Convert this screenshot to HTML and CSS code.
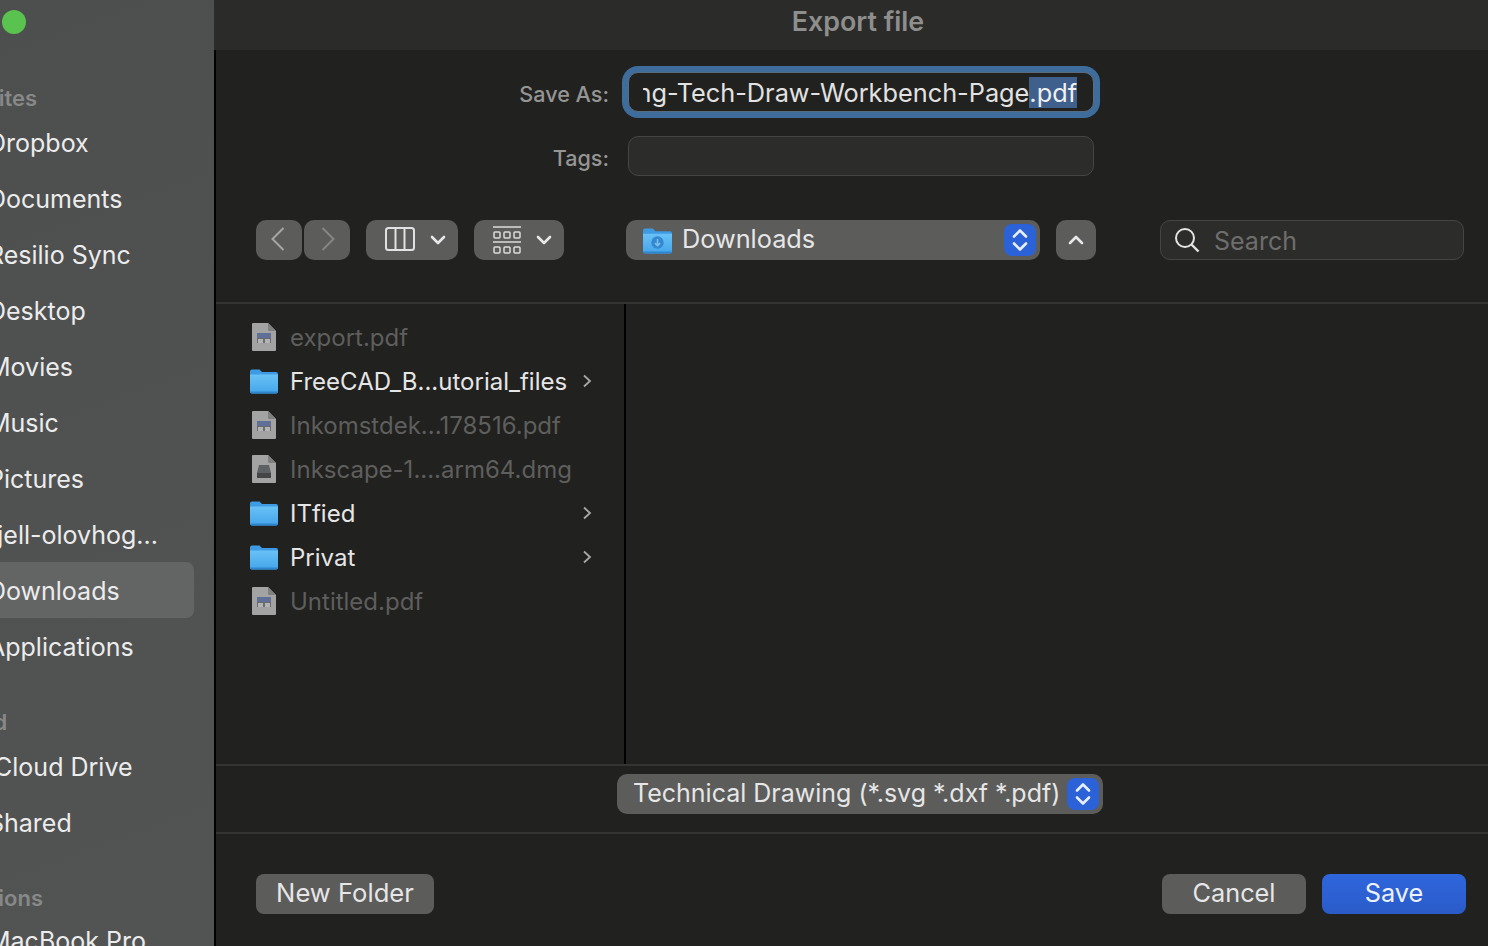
FILE: index.html
```html
<!DOCTYPE html>
<html lang="en">
<head>
  <meta charset="UTF-8">
  <title>Export file</title>
  <link rel="stylesheet" href="styles.css">
</head>
<body>
  <svg class="defs" width="0" height="0">
    <defs>
      <linearGradient id="folder-body" x1="0" y1="0" x2="0" y2="1">
        <stop offset="0" stop-color="#69c1f6"/>
        <stop offset="1" stop-color="#45a5ea"/>
      </linearGradient>
      <symbol id="folder" viewBox="0 0 28 26">
        <path d="M0 3.5A2 2 0 0 1 2 1.5h7.5l2.5 2.5h14a2 2 0 0 1 2 2V8H0z" fill="#3e9be3"/>
        <path d="M0 6.5h28v17a2 2 0 0 1-2 2H2a2 2 0 0 1-2-2z" fill="url(#folder-body)"/>
        <path d="M0 23.5h28a2 2 0 0 1-2 2H2a2 2 0 0 1-2-2z" fill="#2f86cf"/>
      </symbol>
      <symbol id="pdf" viewBox="0 0 24 28">
        <path d="M1 0h15l8 8v19a1 1 0 0 1-1 1H1a1 1 0 0 1-1-1V1a1 1 0 0 1 1-1z" fill="#a3a3a3"/>
        <path d="M16 0l8 8h-7a1 1 0 0 1-1-1z" fill="#808080"/>
        <rect x="5" y="10" width="14" height="5" fill="#5f6f96"/>
        <rect x="5" y="15" width="14" height="5" fill="#6a6a70"/>
        <rect x="6" y="16" width="5" height="4" fill="#b4b4b4"/>
        <rect x="13" y="16" width="5" height="4" fill="#b4b4b4"/>
      </symbol>
      <symbol id="dmg" viewBox="0 0 24 28">
        <path d="M1 0h15l8 8v19a1 1 0 0 1-1 1H1a1 1 0 0 1-1-1V1a1 1 0 0 1 1-1z" fill="#a3a3a3"/>
        <path d="M16 0l8 8h-7a1 1 0 0 1-1-1z" fill="#808080"/>
        <path d="M7 10h10l2 8v5H5v-5z" fill="#5e6163"/>
        <rect x="5" y="18" width="14" height="5" fill="#434547"/>
      </symbol>
      <symbol id="stepper" viewBox="0 0 32 32">
        <rect width="32" height="32" rx="8" fill="#2c62d8"/>
        <path d="M10 12.500l6-6 6 6M10 19.500l6 6 6-6" fill="none" stroke="#e8eefb" stroke-width="2.600" stroke-linecap="round" stroke-linejoin="round"/>
      </symbol>
    </defs>
  </svg>

  <aside class="sidebar">
    <div class="traffic-dot"></div>
    <div class="side-list">
      <div class="side-heading side-heading-first">Favorites</div>
      <div class="side-item">Dropbox</div>
      <div class="side-item">Documents</div>
      <div class="side-item">Resilio Sync</div>
      <div class="side-item">Desktop</div>
      <div class="side-item">Movies</div>
      <div class="side-item">Music</div>
      <div class="side-item">Pictures</div>
      <div class="side-item">fjell-olovhog...</div>
      <div class="side-item side-item-active">Downloads</div>
      <div class="side-item">Applications</div>
      <div class="side-heading side-heading-cloud">iCloud</div>
      <div class="side-item">iCloud Drive</div>
      <div class="side-item">Shared</div>
      <div class="side-heading side-heading-loc">Locations</div>
      <div class="side-item">MacBook Pro</div>
    </div>
  </aside>

  <main class="dialog">
    <header class="titlebar">Export file</header>

    <div class="panel">
      <section class="form">
        <div class="form-row">
          <label class="form-label">Save As:</label>
          <div class="name-field">
            <div class="name-clip"><span>ng-Tech-Draw-Workbench-Page<span class="selected">.pdf</span></span></div>
          </div>
        </div>
        <div class="form-row form-row-tags">
          <label class="form-label">Tags:</label>
          <div class="tags-field"></div>
        </div>
      </section>

      <section class="toolbar">
        <div class="nav-pair">
          <button class="btn nav-btn">
            <svg class="nav-back" width="14" height="24" viewBox="0 0 14 24"><path d="M12.500 1L1.500 12l11 11" fill="none" stroke="#a5a5a5" stroke-width="2"/></svg>
          </button>
          <button class="btn nav-btn">
            <svg class="nav-fwd" width="14" height="24" viewBox="0 0 14 24"><path d="M1.500 1l11 11-11 11" fill="none" stroke="#858585" stroke-width="2"/></svg>
          </button>
        </div>
        <button class="btn view-btn">
          <svg class="view-icon" width="30" height="24" viewBox="0 0 30 24"><rect x="1" y="1" width="28" height="22" rx="2.500" fill="none" stroke="#e2e2e2" stroke-width="2"/><path d="M10.500 1v22M19.500 1v22" stroke="#e2e2e2" stroke-width="2"/></svg>
          <svg class="chev" width="16" height="10" viewBox="0 0 16 10"><path d="M2 2l6 6 6-6" fill="none" stroke="#e8e8e8" stroke-width="2.600" stroke-linecap="round" stroke-linejoin="round"/></svg>
        </button>
        <button class="btn group-btn">
          <svg width="28" height="28" viewBox="0 0 28 28"><path d="M0 1h28M0 16h28" stroke="#dcdcdc" stroke-width="1.500"/><g fill="none" stroke="#dcdcdc" stroke-width="1.500"><rect x="1" y="6" width="6" height="6" rx="1"/><rect x="11" y="6" width="6" height="6" rx="1"/><rect x="21" y="6" width="6" height="6" rx="1"/><rect x="1" y="21" width="6" height="6" rx="1"/><rect x="11" y="21" width="6" height="6" rx="1"/><rect x="21" y="21" width="6" height="6" rx="1"/></g></svg>
          <svg class="chev" width="16" height="10" viewBox="0 0 16 10"><path d="M2 2l6 6 6-6" fill="none" stroke="#e8e8e8" stroke-width="2.600" stroke-linecap="round" stroke-linejoin="round"/></svg>
        </button>
        <button class="btn path-btn">
          <svg width="29" height="27" viewBox="0 0 28 26"><use href="#folder"/><circle cx="14" cy="15" r="6" fill="#3388d0"/><path d="M14 11.500v6M11.500 15.500l2.500 2.500 2.500-2.500" fill="none" stroke="#7cc0ef" stroke-width="1.500"/></svg>
          <span class="path-name">Downloads</span>
          <svg class="stepper" width="32" height="32"><use href="#stepper"/></svg>
        </button>
        <button class="btn up-btn">
          <svg width="16" height="10" viewBox="0 0 16 10"><path d="M2 8l6-6 6 6" fill="none" stroke="#e8e8e8" stroke-width="2.600" stroke-linecap="round" stroke-linejoin="round"/></svg>
        </button>
        <div class="search-field">
          <svg width="26" height="26" viewBox="0 0 26 26"><circle cx="11" cy="11" r="9" fill="none" stroke="#e4e4e4" stroke-width="2"/><path d="M17.500 17.500l7 7" stroke="#e4e4e4" stroke-width="2.400"/></svg>
          <span class="search-text">Search</span>
        </div>
      </section>

      <section class="browser">
        <div class="file-list">
          <div class="file-row file-off">
            <svg class="file-icon" width="24" height="28"><use href="#pdf"/></svg>
            <span>export.pdf</span>
          </div>
          <div class="file-row">
            <svg class="folder-icon" width="28" height="26"><use href="#folder"/></svg>
            <span>FreeCAD_B...utorial_files</span>
            <svg class="file-chev" width="10" height="14" viewBox="0 0 10 14"><path d="M2 1.500L8 7l-6 5.500" fill="none" stroke="#a8a8a8" stroke-width="1.800"/></svg>
          </div>
          <div class="file-row file-off">
            <svg class="file-icon" width="24" height="28"><use href="#pdf"/></svg>
            <span>Inkomstdek...178516.pdf</span>
          </div>
          <div class="file-row file-off">
            <svg class="file-icon" width="24" height="28"><use href="#dmg"/></svg>
            <span>Inkscape-1....arm64.dmg</span>
          </div>
          <div class="file-row">
            <svg class="folder-icon" width="28" height="26"><use href="#folder"/></svg>
            <span>ITfied</span>
            <svg class="file-chev" width="10" height="14" viewBox="0 0 10 14"><path d="M2 1.500L8 7l-6 5.500" fill="none" stroke="#a8a8a8" stroke-width="1.800"/></svg>
          </div>
          <div class="file-row">
            <svg class="folder-icon" width="28" height="26"><use href="#folder"/></svg>
            <span>Privat</span>
            <svg class="file-chev" width="10" height="14" viewBox="0 0 10 14"><path d="M2 1.500L8 7l-6 5.500" fill="none" stroke="#a8a8a8" stroke-width="1.800"/></svg>
          </div>
          <div class="file-row file-off">
            <svg class="file-icon" width="24" height="28"><use href="#pdf"/></svg>
            <span>Untitled.pdf</span>
          </div>
        </div>
        <div class="preview"></div>
      </section>

      <section class="filter">
        <button class="btn filter-btn">
          <span class="filter-text">Technical Drawing (*.svg *.dxf *.pdf)</span>
          <svg class="stepper" width="32" height="32"><use href="#stepper"/></svg>
        </button>
      </section>

      <section class="actions">
        <button class="btn action-btn folder-btn">New Folder</button>
        <div class="actions-right">
          <button class="btn action-btn cancel-btn">Cancel</button>
          <button class="btn action-btn save-btn">Save</button>
        </div>
      </section>
    </div>
  </main>
</body>
</html>
```

FILE: styles.css
```css
* {
  box-sizing: border-box;
}
html, body {
  height: 100%;
}
body {
  margin: 0;
  height: 946px;
  display: flex;
  overflow: hidden;
  background: #21211f;
  color: #e4e4e4;
  font-family: Inter, "Noto Sans", sans-serif;
  font-size: 25px;
}
.defs {
  position: absolute;
}

/* sidebar, cut off by the left edge of the shot */
.sidebar {
  width: 214px;
  flex: none;
  height: 946px;
  overflow: hidden;
  background: linear-gradient(160deg, #4d4e4e 0%, #505151 50%, #525353 100%);
}
.traffic-dot {
  width: 24px;
  height: 24px;
  margin: 10px 0 0 2px;
  border-radius: 50%;
  background: #5ac24f;
}
.side-list {
  margin-left: -12px;
  padding-right: 20px;
}
.side-heading {
  height: 28px;
  line-height: 28px;
  margin-left: -49px;
  font-size: 22px;
  font-weight: 600;
  color: #878888;
  white-space: nowrap;
}
.side-heading-first {
  margin-top: 50px;
  margin-bottom: 2px;
}
.side-heading-cloud {
  margin-top: 34px;
  margin-bottom: 2px;
}
.side-heading-loc {
  margin-top: 34px;
  margin-bottom: 0;
}
.side-item {
  height: 56px;
  line-height: 58px;
  white-space: nowrap;
  border-radius: 8px;
  color: #ececec;
}
.side-item-active {
  background: #636464;
}

.dialog {
  flex: 1;
  display: flex;
  flex-direction: column;
  min-width: 0;
}
.titlebar {
  height: 50px;
  flex: none;
  padding: 0 0 8px 14px;
  background: #2b2b2a;
  display: flex;
  align-items: center;
  justify-content: center;
  color: #8e8e8d;
  font-weight: 600;
  font-size: 26.800px;
}
.panel {
  flex: 1;
  display: flex;
  flex-direction: column;
  border-left: 2px solid #000;
}

/* save as / tags */
.form {
  padding-top: 22px;
}
.form-row {
  display: flex;
  align-items: center;
  gap: 19px;
  height: 40px;
}
.form-row-tags {
  margin-top: 24px;
}
.form-label {
  width: 393px;
  text-align: right;
  font-size: 21.600px;
  font-weight: 500;
  color: #959594;
  padding-top: 4px;
}
.name-field {
  width: 466px;
  height: 40px;
  border-radius: 10px;
  border: 1px solid #5a6d80;
  box-shadow: 0 0 0 6px #3e6d9b;
  background: #21211f;
  padding: 0 16px 0 14px;
}
.name-clip {
  height: 38px;
  display: flex;
  justify-content: flex-end;
  align-items: center;
  overflow: hidden;
  white-space: nowrap;
  font-size: 25.300px;
  color: #e2e2e2;
}
.selected {
  background: #3f5f8d;
  color: #f0f0f0;
}
.tags-field {
  width: 466px;
  height: 40px;
  border-radius: 10px;
  background: #2c2c2b;
  border: 1px solid #454544;
}

/* toolbar */
.toolbar {
  display: flex;
  align-items: center;
  height: 40px;
  margin-top: 44px;
  padding-left: 40px;
}
.btn {
  display: flex;
  align-items: center;
  height: 40px;
  padding: 0;
  border: none;
  border-radius: 10px;
  background: #5c5c5b;
  color: #e6e6e6;
  font-family: inherit;
  font-size: 25.300px;
  white-space: nowrap;
}
.nav-pair {
  display: flex;
  gap: 2px;
}
.nav-btn {
  width: 46px;
  justify-content: center;
}
.nav-back {
  margin-right: 3px;
  margin-bottom: 2px;
}
.nav-fwd {
  margin-left: 2px;
  margin-bottom: 2px;
}
.view-btn {
  width: 92px;
  margin-left: 16px;
  padding-left: 19px;
}
.view-icon {
  margin-bottom: 2px;
}
.group-btn {
  width: 90px;
  margin-left: 16px;
  padding-left: 19px;
}
.chev {
  margin-left: auto;
  margin-right: 12px;
}
.path-btn {
  width: 414px;
  margin-left: 62px;
  padding-left: 17px;
  padding-right: 4px;
}
.path-name {
  margin-left: 10px;
  margin-bottom: 4px;
}
.stepper {
  margin-left: auto;
}
.up-btn {
  width: 40px;
  margin-left: 16px;
  justify-content: center;
}
.search-field {
  width: 304px;
  height: 40px;
  margin-left: 64px;
  display: flex;
  align-items: center;
  gap: 14px;
  padding-left: 13px;
  border-radius: 10px;
  background: #2c2c2b;
  border: 1px solid #454544;
  color: #6e6e6d;
}
.search-text {
  margin-top: 2px;
}

/* file browser */
.browser {
  display: flex;
  height: 464px;
  margin-top: 42px;
  border-top: 2px solid #343433;
  border-bottom: 2px solid #343433;
}
.file-list {
  width: 408px;
  padding: 11px 0 0 34px;
}
.file-row {
  display: flex;
  align-items: center;
  height: 44px;
  white-space: nowrap;
  color: #e6e6e6;
  font-size: 24px;
}
.file-off {
  color: #5e5e5d;
}
.file-icon {
  margin-left: 2px;
  margin-right: 14px;
}
.folder-icon {
  margin-right: 12px;
}
.file-chev {
  margin-left: auto;
  margin-right: 32px;
}
.preview {
  flex: 1;
  border-left: 2px solid #000;
}

/* file type popup */
.filter {
  height: 68px;
  flex: none;
  padding: 8px 0 0 401px;
  border-bottom: 2px solid #343433;
}
.filter-btn {
  width: 486px;
  height: 40px;
  padding: 0 4px 0 16px;
}
.filter-text {
  font-size: 25px;
  margin-bottom: 3px;
}

.actions {
  display: flex;
  justify-content: space-between;
  padding: 40px 22px 0 40px;
}
.actions-right {
  display: flex;
  gap: 16px;
}
.action-btn {
  justify-content: center;
  border-radius: 8px;
  padding-bottom: 4px;
}
.folder-btn {
  width: 178px;
  font-size: 25.600px;
}
.cancel-btn {
  width: 144px;
}
.save-btn {
  width: 144px;
  background: linear-gradient(#2f66dd, #2a5bc8);
  color: #eef2fb;
}
```
